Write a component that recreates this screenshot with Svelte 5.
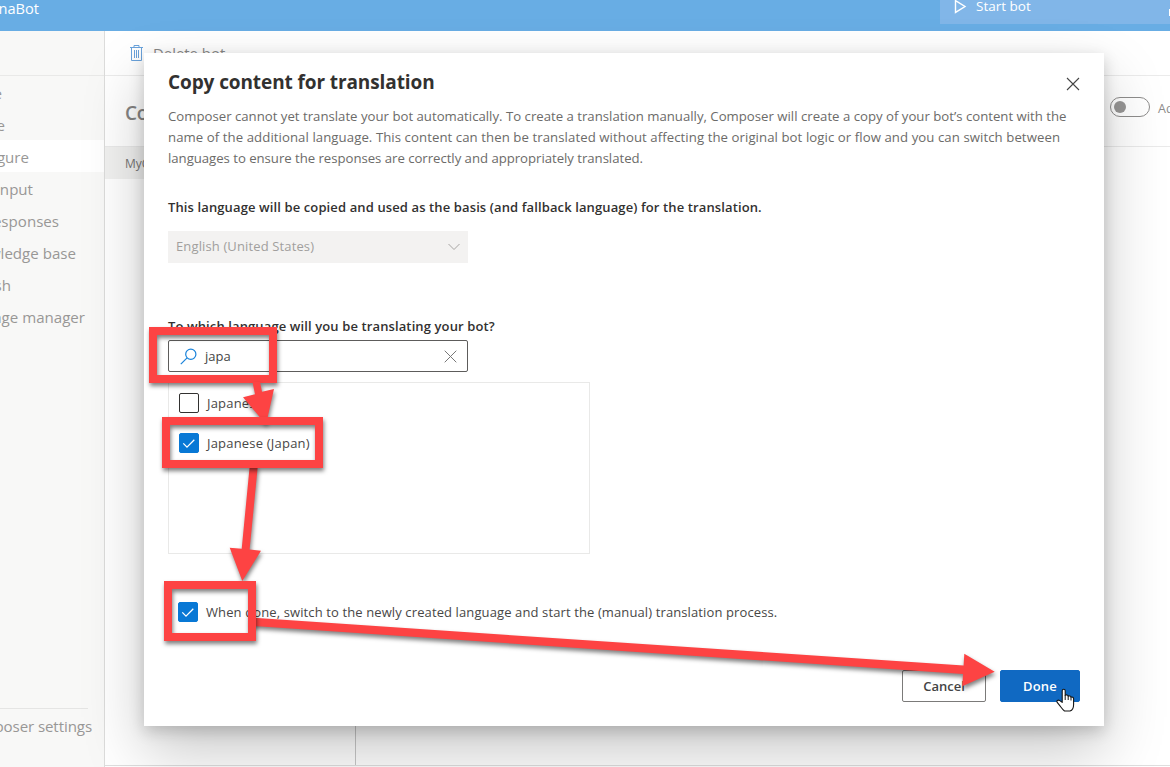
<script lang="ts">
  const nav = [
    { label: 'Home', end: 2 },
    { label: 'Create', end: 5 },
    { label: 'Configure', end: 29, active: true },
    { label: 'User input', end: 33 },
    { label: 'Bot responses', end: 59 },
    { label: 'Knowledge base', end: 76 },
    { label: 'Publish', end: 11 },
    { label: 'Package manager', end: 85 },
  ];
</script>

<div class="app">
  <header>
    <div class="name"><span>LunaBot</span></div>
    <div class="start">
      <svg width="13" height="15" viewBox="0 0 13 15"><path d="M1.5 1.6V13.4L11 7.5Z" fill="none" stroke="#fff" stroke-width="1.4" /></svg>
      <span>Start bot</span>
      <i></i>
    </div>
  </header>
  <div class="body">
    <nav>
      <div class="top"></div>
      <ul>
        {#each nav as item}
          <li class:active={item.active}><span style="width: {item.end}px">{item.label}</span></li>
        {/each}
      </ul>
      <div class="settings"><span>Composer settings</span></div>
    </nav>
    <main>
      <div class="toolbar">
        <svg width="13" height="17" viewBox="0 0 13 17" fill="none" stroke="#6ba3dc" stroke-width="1"><path d="M0 2.5H13M4 2.5V.5H9V2.5M1.5 2.5V15.5H11.5V2.5M4.5 5V13M6.5 5V13M8.5 5V13" /></svg>
        <span>Delete bot</span>
      </div>
      <div class="heading">
        <h1>Co</h1>
        <div class="toggle"><b></b></div>
        <span class="adv">Advanced</span>
      </div>
      <div class="split">
        <div class="tree"><div class="row">MyC</div></div>
        <div class="pane"></div>
      </div>
    </main>
  </div>

  <div class="overlay">
    <section class="dialog">
      <div class="title">
        <h2>Copy content for translation</h2>
        <svg width="14" height="14" viewBox="0 0 14 14"><path d="M1 1L13 13M13 1L1 13" stroke="#444" stroke-width="1.1" /></svg>
      </div>
      <p><span class="l1">Composer cannot yet translate your bot automatically. To create a translation manually, Composer will create a copy of your bot’s content with the</span><br /><span class="l2">name of the additional language. This content can then be translated without affecting the original bot logic or flow and you can switch between</span><br /><span class="l3">languages to ensure the responses are correctly and appropriately translated.</span></p>
      <h3 class="from">This language will be copied and used as the basis (and fallback language) for the translation.</h3>
      <div class="select">
        <span>English (United States)</span>
        <svg width="12" height="8" viewBox="0 0 12 8"><path d="M.5 1L6 6.5L11.5 1" fill="none" stroke="#a6a4a2" /></svg>
      </div>
      <h3 class="to">To which language will you be translating your bot?</h3>
      <div class="search">
        <svg width="17" height="17" viewBox="0 0 17 17" fill="none" stroke="#1a83da" stroke-width="1.2"><circle cx="10.8" cy="6.2" r="5.1" /><path d="M7.1 9.8L.8 16.1" /></svg>
        <span>japa</span>
        <svg width="13" height="13" viewBox="0 0 13 13"><path d="M.7 .7L12.3 12.3M12.3 .7L.7 12.3" stroke="#777" /></svg>
      </div>
      <div class="list">
        <div class="option"><div class="box"></div><span class="o2">Japanese</span></div>
        <div class="option">
          <div class="box on"><svg width="14" height="11" viewBox="0 0 14 11"><path d="M1.3 5.4L5 9.1L12.3 1.8" /></svg></div>
          <span class="o2">Japanese (Japan)</span>
        </div>
      </div>
      <div class="option switch">
        <div class="box on"><svg width="14" height="11" viewBox="0 0 14 11"><path d="M1.3 5.4L5 9.1L12.3 1.8" /></svg></div>
        <span class="o3">When done, switch to the newly created language and start the (manual) translation process.</span>
      </div>
      <div class="actions">
        <button class="cancel">Cancel</button>
        <button class="done">Done</button>
      </div>
    </section>
  </div>

  <svg class="marks" width="1170" height="767" viewBox="0 0 1170 767">
    <g class="red" fill="none" stroke="#fd4343" stroke-width="8">
      <rect x="153" y="331" width="120" height="48" />
    </g>
    <g class="red" fill="#fd4343">
      <path d="M252.5 382L260 382L262 391.8L274 389L266 424.5L243 397.3L255 394.2Z" />
      <path d="M249.7 466H257.8L249.6 549.5L261 550.7L242.3 581L229.7 547.7L241.7 548.8Z" />
      <path d="M250 617.6L963.6 665.6L964.3 653.7L994.7 671.7L962.3 686.3L963 674L250 625.7Z" />
    </g>
    <g class="red" fill="none" stroke="#fd4343" stroke-width="8">
      <rect x="166" y="421" width="153" height="43" />
      <rect x="168" y="585" width="84" height="52" />
    </g>
    <g transform="translate(1056 688)" stroke-linejoin="round">
      <path d="M6.2 14.4V2.8C6.2 .8 9.2 .8 9.2 2.8V7.3C10.2 6.5 12 7 12.2 8.1C13.3 7.5 14.8 8 15 9.1C16.4 8.7 17.6 9.5 17.6 10.8V16.5C17.6 19.5 16.5 22.3 14 23H8.5C6.6 21.8 5.2 19.3 3 16.6L1.2 14.3C.1 12.9 2 11.6 3.5 12.4Z" fill="#fff" stroke="#151515" stroke-width="1.1" />
      <path d="M9.2 7V12M12.2 8V12M15 9V12.5" stroke="#151515" stroke-width="1" />
    </g>
  </svg>
</div>

<style>
  :global(body) { margin: 0; overflow: hidden; }
  .app { position: relative; width: 1170px; height: 767px; overflow: hidden; display: flex; flex-direction: column; background: #fff; color: #323130; font-family: "Open Sans", "Noto Sans", sans-serif; font-size: 13px; }
  * { box-sizing: border-box; }
  span, h1, h2, h3 { white-space: nowrap; }
  svg { flex: none; display: block; }
  header { height: 31px; background: #68ade4; display: flex; justify-content: space-between; color: #fff; overflow: hidden; }
  .name { width: 39px; display: flex; justify-content: flex-end; font-size: 14.6px; line-height: 16px; font-weight: 500; }
  .start { width: 230px; height: 24px; background: #81b6e8; display: flex; align-items: flex-start; padding-left: 14px; font-size: 13.5px; line-height: 12px; font-weight: 500; }
  .start svg { margin-top: -1px; }
  .start span { margin-left: 9px; }
  .start i { width: 1px; height: 7px; background: #fff; margin: 9px 0 0 auto; }
  .body { flex: 1; display: flex; min-height: 0; }
  nav { width: 105px; flex: none; background: #f8f8f7; border-right: 1px solid #dcdcdb; display: flex; flex-direction: column; overflow: hidden; color: #989796; font-size: 15.1px; }
  .top { height: 45px; border-bottom: 1px solid #e9e9e8; }
  ul { list-style: none; margin: 0; padding: 0; margin-top: 32px; margin-top: 0; }
  li { height: 32px; line-height: 34px; }
  li.active { background: #fff; }
  li span { display: flex; justify-content: flex-end; }
  .settings { margin-top: auto; width: 88px; height: 59px; border-top: 1px solid #e5e5e4; line-height: 35px; }
  .settings span { display: flex; justify-content: flex-end; width: 92px; letter-spacing: -.1px; }
  main { flex: 1; min-width: 0; display: flex; flex-direction: column; }
  .toolbar { height: 45px; border-bottom: 1px solid #ebebeb; display: flex; align-items: center; padding-left: 25px; gap: 10px; font-size: 14.9px; color: #898887; }
  .heading { height: 71px; border-bottom: 1px solid #eaeaea; display: flex; align-items: center; padding: 0 0 6px 20px; overflow: hidden; }
  h1 { flex: none; width: 975px; margin: 0; font-size: 19px; font-weight: 600; color: #858483; letter-spacing: -.2px; padding-top: 10px; }
  .toggle { flex: none; margin: -2px 0 0 10px; width: 40px; height: 20px; border: 1px solid #8e8d8c; border-radius: 10px; padding: 3px; }
  .toggle b { display: block; width: 12px; height: 12px; border-radius: 6px; background: #979695; }
  .adv { margin: 0 0 0 8px; font-size: 12.5px; color: #8d8c8b; }
  .split { flex: 1; display: flex; border-bottom: 1px solid #dedede; margin-bottom: 1px; }
  .tree { width: 251px; border-right: 1px solid #c8c8c8; }
  .row { height: 32px; background: #f1f1f0; padding-left: 20px; line-height: 33px; font-size: 12px; font-weight: 500; color: #777675; }
  .overlay { position: absolute; inset: 0; padding: 53px 0 0 144px; }
  .dialog { width: 960px; height: 673px; background: #fff; padding: 0 24px; display: flex; flex-direction: column; box-shadow: 0 25.6px 57.6px rgba(0, 0, 0, .22), 0 4.8px 14.4px rgba(0, 0, 0, .18); }
  .title { display: flex; justify-content: space-between; height: 53px; }
  h2 { margin: 15px 0 0; font-size: 19px; line-height: 28px; font-weight: 700; letter-spacing: -.1px; }
  .title svg { margin: 24px 0 0; }
  p { margin: 0; height: 63px; font-size: 13.2px; line-height: 21px; color: #6c6b69; }
  .l2 { letter-spacing: .07px; }
  .l3 { letter-spacing: -.035px; }
  h3 { margin: 0; font-size: 13px; line-height: 18px; font-weight: 600; letter-spacing: .115px; }
  .from { margin-top: 29px; }
  .select { margin-top: 15px; width: 300px; height: 32px; background: #f3f2f1; padding: 0 8px; display: flex; align-items: center; justify-content: space-between; color: #a19f9d; line-height: 30px; letter-spacing: .13px; }
  .select span { padding-bottom: 2px; }
  .to { margin-top: 54px; }
  .search { margin-top: 5px; width: 300px; height: 32px; border: 1px solid #5d5c5b; border-radius: 2px; padding: 0 10px 0 11px; display: flex; align-items: center; }
  .search span { margin: 0 auto 0 8px; color: #444; }
  .list { margin-top: 10px; width: 422px; height: 172px; border: 1px solid #e9e9e8; padding: 10px; display: flex; flex-direction: column; gap: 20px; }
  .option { height: 20px; display: flex; align-items: center; gap: 8px; color: #484746; letter-spacing: .115px; }
  .o2 { letter-spacing: .2px; }
  .box { width: 20px; height: 20px; border: 1px solid #323130; border-radius: 2px; flex: none; display: flex; align-items: center; justify-content: center; }
  .box.on { background: #0878d5; border-color: #0878d5; }
  .box path { fill: none; stroke: #fff; stroke-width: 1.3; }
  .switch { margin: 48px 0 0 10px; }
  .actions { margin: 48px 0 0; display: flex; justify-content: flex-end; gap: 14px; }
  button { height: 32px; padding: 0; font: 600 13px/30px "Open Sans", "Noto Sans", sans-serif; border-radius: 2px; }
  .cancel { width: 84px; background: #fff; border: 1px solid #7b7a79; color: #444; }
  .done { width: 80px; background: #1069c2; border: 1px solid #1069c2; color: #fff; letter-spacing: .2px; }
  .marks { position: absolute; left: 0; top: 0; }
  .red { filter: drop-shadow(1px 3px 2px rgba(0, 0, 0, .5)); }
</style>
